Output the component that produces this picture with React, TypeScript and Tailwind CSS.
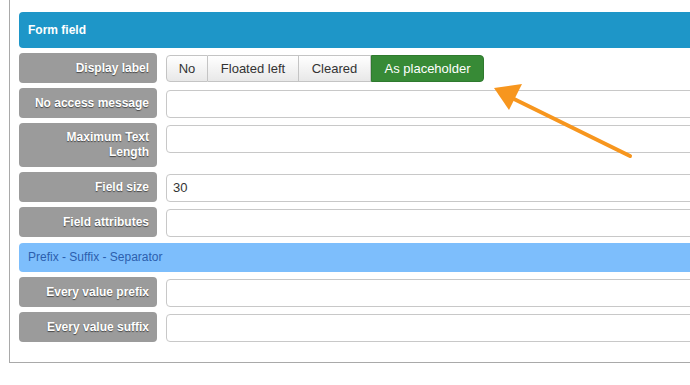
import React from "react";

const font = { fontFamily: '"Liberation Sans", Arial, sans-serif' };

function Label({ children, tall }: { children: React.ReactNode; tall?: boolean }) {
  return (
    <div
      className={`bg-[#9b9b9b] rounded-[4px] text-white font-bold text-[12px] text-right pr-[8px] pl-[8px] [text-shadow:0_1px_1px_rgba(0,0,0,0.55)] ${
        tall ? "h-[44px] pt-[7px] leading-[15px]" : "h-[30px] leading-[30px]"
      }`}
    >
      {children}
    </div>
  );
}

function Input({ value }: { value?: string }) {
  return (
    <div className="h-[28px] mt-[2px] border border-[#c8c8c8] rounded-[4px] bg-white text-[13px] text-[#333] leading-[26px] pl-[6px]">
      {value}
    </div>
  );
}

function Row({ label, children, tall }: { label: React.ReactNode; children: React.ReactNode; tall?: boolean }) {
  return (
    <div className="grid grid-cols-[138px_1fr] gap-x-[9px]">
      <Label tall={tall}>{label}</Label>
      <div>{children}</div>
    </div>
  );
}

export default function App() {
  return (
    <div className="w-[690px] h-[385px] overflow-hidden bg-white relative" style={font}>
      <div className="ml-[9px] w-[720px] border-l border-b border-[#a9a9a9] pl-[9px] pt-[12px] pb-[20px] flex flex-col gap-[5px]">
        <div className="h-[36px] bg-[#1e96c8] rounded-l-[4px] text-white font-bold text-[12px] leading-[36px] pl-[9px]">
          Form field
        </div>
        <Row label="Display label">
          <div className="mt-[2px] flex h-[27px] text-[13px]">
            <div className="w-[42px] flex items-center justify-center border border-[#c4c4c4] rounded-l-[4px] bg-gradient-to-b from-white to-[#e8e8e8] text-[#333]">
              No
            </div>
            <div className="w-[91px] flex items-center justify-center border border-l-0 border-[#c4c4c4] bg-gradient-to-b from-white to-[#e8e8e8] text-[#333]">
              Floated left
            </div>
            <div className="w-[72px] flex items-center justify-center border border-l-0 border-[#c4c4c4] bg-gradient-to-b from-white to-[#e8e8e8] text-[#333]">
              Cleared
            </div>
            <div className="w-[113px] flex items-center justify-center rounded-r-[4px] bg-[#378a36] border border-[#2f7a2e] text-white">
              As placeholder
            </div>
          </div>
        </Row>
        <Row label="No access message">
          <Input />
        </Row>
        <Row
          tall
          label={
            <>
              Maximum Text
              <br />
              Length
            </>
          }
        >
          <Input />
        </Row>
        <Row label="Field size">
          <Input value="30" />
        </Row>
        <Row label="Field attributes">
          <Input />
        </Row>
        <div className="h-[29px] mt-[1px] bg-[#7dbefc] rounded-l-[4px] text-[#2c5fae] text-[12px] leading-[29px] pl-[9px]">
          Prefix - Suffix - Separator
        </div>
        <Row label="Every value prefix">
          <Input />
        </Row>
        <Row label="Every value suffix">
          <Input />
        </Row>
      </div>
      <svg className="absolute left-0 top-0 pointer-events-none" width="690" height="385">
        <line x1="630" y1="156" x2="512" y2="98" stroke="#f7961e" strokeWidth="4" strokeLinecap="round" />
        <polygon points="494,88 522,84 509,110" fill="#f7961e" />
      </svg>
    </div>
  );
}
